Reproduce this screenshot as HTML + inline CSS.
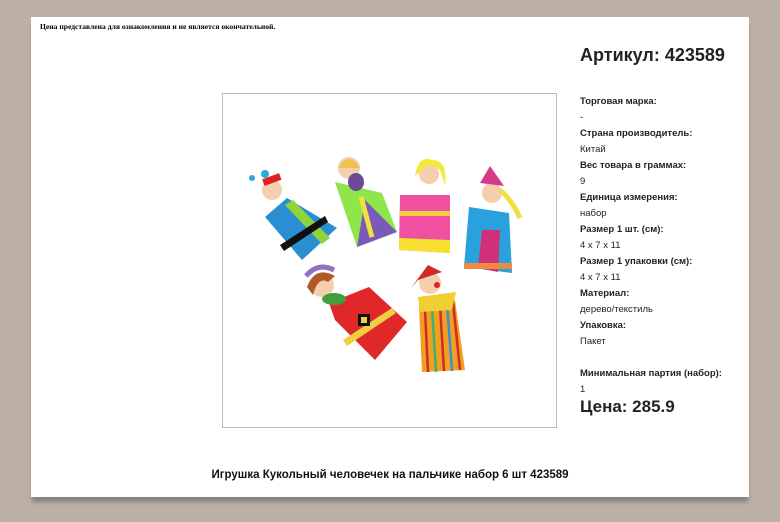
<!DOCTYPE html>
<html><head><meta charset="utf-8"><style>
html,body{margin:0;padding:0}
body{width:780px;height:522px;background:#bcb0a5;position:relative;overflow:hidden;font-family:"Liberation Sans",sans-serif}
.card{position:absolute;left:31px;top:17px;width:718px;height:480px;background:#fff;box-shadow:0 6px 4px -1px #858280}
.note{position:absolute;left:40px;top:22px;font:bold 7.6px "Liberation Serif",serif;color:#000}
.art{position:absolute;left:580px;top:45px;font-weight:bold;font-size:18px;color:#222}
.props{position:absolute;left:580px;top:94px;font-size:9.5px;color:#222;line-height:16px}
.props b{font-weight:bold}
.price{position:absolute;left:580px;top:397px;font-weight:bold;font-size:17px;color:#222}
.img{position:absolute;left:222px;top:93px;width:333px;height:333px;border:1px solid #bbb;box-sizing:content-box}
.title{position:absolute;left:0;width:780px;top:469px;text-align:center;font-size:11.5px;font-weight:bold;color:#111}
svg{position:absolute;left:0;top:0}
</style></head><body>
<div class="card"></div>
<div class="note">Цена представлена для ознакомления и не является окончательной.</div>
<div class="art">Артикул: 423589</div>
<div class="props">
<b>Торговая марка:</b><br>-<br>
<b>Страна производитель:</b><br>Китай<br>
<b>Вес товара в граммах:</b><br>9<br>
<b>Единица измерения:</b><br>набор<br>
<b>Размер 1 шт. (см):</b><br>4 x 7 x 11<br>
<b>Размер 1 упаковки (см):</b><br>4 x 7 x 11<br>
<b>Материал:</b><br>дерево/текстиль<br>
<b>Упаковка:</b><br>Пакет<br><br>
<b>Минимальная партия (набор):</b><br>1
</div>
<div class="price">Цена: 285.9</div>
<div class="img"></div>
<svg width="780" height="522" viewBox="0 0 780 522">
<polygon points="265,217 287,198 337,228 302,260" fill="#2a8fd0"/>
<polygon points="285,205 293,200 330,238 322,244" fill="#8ed43a"/>
<polygon points="280,245 325,216 328,222 284,251" fill="#111"/>
<circle cx="272" cy="190" r="10" fill="#f3cfae"/>
<rect x="263" y="176" width="18" height="7" fill="#d22" transform="rotate(-20 272 180)"/>
<circle cx="265" cy="174" r="4" fill="#2aa8e0"/>
<circle cx="252" cy="178" r="3" fill="#2aa8e0"/>
<polygon points="335,182 382,193 397,232 357,247" fill="#8ee64a"/>
<polygon points="365,200 397,232 357,247" fill="#7a5ab8"/>
<rect x="364" y="196" width="5" height="42" fill="#f0e040" transform="rotate(-15 366 217)"/>
<circle cx="349" cy="168" r="11" fill="#f3cfae"/>
<path d="M338 168 Q349 150 360 168" fill="#f0c050"/>
<ellipse cx="356" cy="182" rx="8" ry="9" fill="#6a4a98"/>
<polygon points="400,195 450,195 450,253 399,250" fill="#f050a0"/>
<rect x="400" y="211" width="50" height="5" fill="#f0d040"/>
<polygon points="399,238 450,240 450,253 399,250" fill="#f7e030"/>
<circle cx="429" cy="174" r="10" fill="#f3cfae"/>
<path d="M415 176 Q418 155 432 160 Q448 160 445 185 L440 170 Q428 160 420 172 Z" fill="#f5e838"/>
<rect x="420" y="186" width="18" height="9" fill="#fff"/>
<polygon points="469,207 509,213 512,273 464,267" fill="#2aa0dc"/>
<polygon points="482,230 500,230 498,272 478,268" fill="#d0307a"/>
<rect x="464" y="263" width="48" height="6" fill="#f08a40"/>
<circle cx="492" cy="193" r="10" fill="#f3cfae"/>
<polygon points="480,183 504,186 490,166" fill="#d83a8a"/>
<path d="M500 190 Q512 200 520 218" stroke="#f0e040" stroke-width="5" fill="none"/>
<polygon points="329,303 369,287 407,322 375,360 335,320" fill="#e02828"/>
<polygon points="343,340 392,308 396,313 347,346" fill="#f0d040"/>
<rect x="358" y="314" width="12" height="12" fill="#111"/>
<rect x="361" y="317" width="6" height="6" fill="#f0d040"/>
<circle cx="322" cy="285" r="12" fill="#f3cfae"/>
<path d="M307 287 Q315 265 335 276 L328 282 Q318 276 313 295 Z" fill="#b05a2a"/>
<path d="M306 276 Q318 262 334 270" stroke="#9070c0" stroke-width="5" fill="none"/>
<ellipse cx="334" cy="299" rx="12" ry="6" fill="#40a040"/>
<polygon points="419,307 455,300 465,370 422,372" fill="#f0a020"/>
<g stroke-width="2.5">
<line x1="425" y1="310" x2="428" y2="372" stroke="#d02a2a"/>
<line x1="432" y1="308" x2="436" y2="372" stroke="#40b070"/>
<line x1="440" y1="306" x2="444" y2="371" stroke="#d02a2a"/>
<line x1="447" y1="304" x2="452" y2="371" stroke="#3a90d0"/>
<line x1="453" y1="302" x2="460" y2="370" stroke="#d02a2a"/>
</g>
<polygon points="418,297 456,292 452,310 420,312" fill="#f0d030"/>
<circle cx="430" cy="283" r="11" fill="#f3cfae"/>
<circle cx="437" cy="285" r="3" fill="#e02020"/>
<polygon points="418,280 442,272 428,265 411,288" fill="#d02a2a"/>
</svg>
<div class="title">Игрушка Кукольный человечек на пальчике набор 6 шт 423589</div>
</body></html>
